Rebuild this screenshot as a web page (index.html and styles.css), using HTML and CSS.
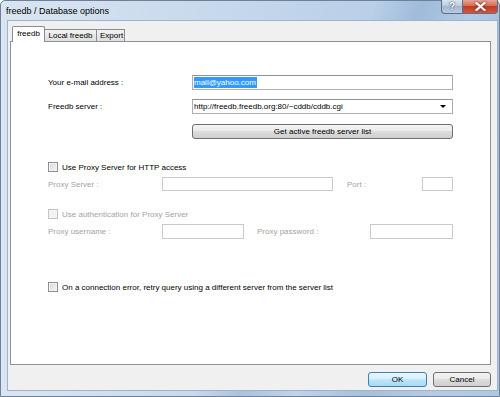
FILE: index.html
```html
<!DOCTYPE html>
<html>
<head>
<meta charset="utf-8">
<link rel="stylesheet" href="styles.css">
</head>
<body>
<div class="window">
  <div class="titlebar">
    <span class="title">freedb / Database options</span>
    <div class="caption-btns">
      <div class="cbtn help">?</div>
      <div class="cbtn close">
        <svg width="11" height="9" viewBox="0 0 11 9"><path d="M1.5 1 L9.5 8 M9.5 1 L1.5 8" stroke="#fff" stroke-width="2.2" stroke-linecap="square"/></svg>
      </div>
    </div>
  </div>
  <div class="client">
    <div class="tabs">
      <div class="tab active">freedb</div>
      <div class="tab">Local freedb</div>
      <div class="tab">Export</div>
    </div>
    <div class="panel">
      <div class="row r-email">
        <span class="lbl w144">Your e-mail address :</span>
        <div class="field w261"><span class="sel">mail@yahoo.com</span></div>
      </div>
      <div class="row r-server">
        <span class="lbl w144">Freedb server :</span>
        <div class="field combo w261"><span>http://freedb.freedb.org:80/~cddb/cddb.cgi</span><span class="arrow"></span></div>
      </div>
      <div class="row r-getlist">
        <span class="w144"></span>
        <div class="pbtn w261">Get active freedb server list</div>
      </div>
      <div class="row r-check r-proxycheck">
        <span class="cb"></span><span class="cbl">Use Proxy Server for HTTP access</span>
      </div>
      <div class="row r-proxy">
        <span class="lbl dis w114">Proxy Server :</span>
        <div class="field disf w171"></div>
        <span class="lbl dis portl">Port :</span>
        <div class="field disf w31"></div>
      </div>
      <div class="row r-check r-authcheck">
        <span class="cb discb"></span><span class="cbl dis">Use authentication for Proxy Server</span>
      </div>
      <div class="row r-user">
        <span class="lbl dis w114">Proxy username :</span>
        <div class="field disf w82"></div>
        <span class="lbl dis passl">Proxy password :</span>
        <div class="field disf w83"></div>
      </div>
      <div class="row r-check r-retry">
        <span class="cb"></span><span class="cbl">On a connection error, retry query using a different server from the server list</span>
      </div>
    </div>
    <div class="footer">
      <div class="btn default">OK</div>
      <div class="btn">Cancel</div>
    </div>
  </div>
</div>
</body>
</html>
```

FILE: styles.css
```css
html, body {
  margin: 0;
  padding: 0;
}
body {
  font-family: "Liberation Sans", Arial, sans-serif;
  font-size: 8px;
  color: #000;
  background: #fff;
}
.window {
  width: 500px;
  height: 397px;
  box-sizing: border-box;
  border: 1px solid #6f8196;
  border-radius: 5px 5px 0 0;
  background:
    linear-gradient(115deg, rgba(255,255,255,0) 0%, rgba(255,255,255,0) 55%, rgba(120,155,195,0.35) 62%, rgba(255,255,255,0) 70%, rgba(120,155,195,0.3) 80%, rgba(255,255,255,0) 90%),
    linear-gradient(90deg, #d9e5f2 0%, #c6d8ec 45%, #aec8e5 100%);
  display: flex;
  flex-direction: column;
}
.titlebar {
  height: 20px;
  display: flex;
  justify-content: space-between;
  align-items: flex-start;
}
.title {
  font-size: 9px;
  padding-left: 5px;
  line-height: 20px;
  color: #000;
}
.caption-btns {
  display: flex;
  margin-right: 1px;
  margin-top: -1px;
}
.cbtn {
  height: 14px;
  box-sizing: border-box;
  border: 1px solid #5e6f84;
  border-top: none;
  display: flex;
  align-items: center;
  justify-content: center;
}
.help {
  width: 21px;
  border-radius: 0 0 0 4px;
  border-right: none;
  background: linear-gradient(#d8e4f1 0%, #bccde2 45%, #a3b8d2 50%, #b9cce2 100%);
  color: #fff;
  font-weight: bold;
  font-size: 10px;
  text-shadow: 0 0 2px #45566b, 0 0 1px #45566b;
}
.close {
  width: 36px;
  border-radius: 0 0 4px 0;
  background: linear-gradient(#e8a493 0%, #d56b55 45%, #c33b22 50%, #d2583e 100%);
}
.close svg {
  filter: drop-shadow(0 0 1px #5a1a10);
}
.client {
  margin-left: 7px;
  margin-right: 2px;
  height: 369px;
  background: #f0f0f0;
  box-shadow: 0 0 0 1px #9fb4cc;
  display: flex;
  flex-direction: column;
}
.tabs {
  display: flex;
  align-items: flex-end;
  margin-top: 4px;
  margin-left: 4px;
  height: 16px;
  position: relative;
  z-index: 1;
}
.tab {
  height: 12px;
  box-sizing: border-box;
  border: 1px solid #898c95;
  border-bottom: none;
  border-left: none;
  background: linear-gradient(#f2f2f2, #dedede);
  line-height: 11px;
  padding: 0 3px;
  text-align: center;
}
.tab.active {
  height: 16px;
  width: 33px;
  border-left: 1px solid #898c95;
  background: #fff;
  line-height: 14px;
  margin-bottom: -1px;
  border-radius: 2px 2px 0 0;
}
.tab:nth-child(2) { width: 52px; }
.tab:nth-child(3) { width: 28px; }
.panel {
  margin-left: 2px;
  width: 481px;
  height: 324px;
  box-sizing: border-box;
  border: 1px solid #8e9196;
  background: #fff;
  padding-top: 33px;
  padding-left: 37px;
  display: flex;
  flex-direction: column;
}
.row {
  display: flex;
  align-items: center;
}
.r-email { height: 15px; }
.r-server { height: 15px; margin-top: 9px; }
.r-getlist { height: 15px; margin-top: 10px; }
.r-proxycheck { margin-top: 22px; }
.r-proxy { height: 14px; margin-top: 4px; }
.r-authcheck { margin-top: 17px; }
.r-user { height: 15px; margin-top: 4px; }
.r-retry { margin-top: 42px; }
.r-check { height: 12px; }
.lbl { flex: none; }
.w144 { width: 144px; flex: none; }
.w114 { width: 114px; }
.w261 { width: 261px; }
.w171 { width: 171px; }
.w31 { width: 31px; }
.w82 { width: 82px; }
.w83 { width: 83px; }
.portl { width: 75px; margin-left: 14px; }
.passl { width: 113px; margin-left: 13px; }
.dis { color: #a3a3a3; }
.field {
  height: 100%;
  box-sizing: border-box;
  border: 1px solid #abadb3;
  border-top-color: #8d939b;
  background: #fff;
  display: flex;
  align-items: center;
  padding-left: 1px;
  flex: none;
}
.disf {
  border-color: #c9cacd;
}
.sel {
  background: #3399ff;
  color: #fff;
  line-height: 11px;
  padding-right: 1px;
}
.combo {
  justify-content: space-between;
  padding-right: 6px;
}
.arrow {
  width: 0;
  height: 0;
  border-left: 3px solid transparent;
  border-right: 3px solid transparent;
  border-top: 3px solid #000;
}
.pbtn {
  height: 100%;
  box-sizing: border-box;
  border: 1px solid #707070;
  border-radius: 3px;
  background: linear-gradient(#f3f3f3 0%, #ebebeb 45%, #dddddd 50%, #cfcfcf 100%);
  display: flex;
  align-items: center;
  justify-content: center;
  flex: none;
}
.cb {
  width: 10px;
  height: 10px;
  box-sizing: border-box;
  border: 1px solid #8e8f8f;
  background: linear-gradient(135deg, #d8d8d8, #f5f5f5);
  box-shadow: inset 0 0 0 1px #f4f4f4;
  flex: none;
}
.discb {
  border-color: #c3c3c3;
  background: #f2f2f2;
}
.cbl {
  margin-left: 4px;
}
.footer {
  display: flex;
  justify-content: flex-end;
  margin-top: 7px;
  margin-right: 6px;
  gap: 6px;
}
.btn {
  width: 58px;
  height: 15px;
  box-sizing: border-box;
  border: 1px solid #707070;
  border-radius: 3px;
  background: linear-gradient(#f3f3f3 0%, #ebebeb 45%, #dddddd 50%, #cfcfcf 100%);
  display: flex;
  align-items: center;
  justify-content: center;
}
.btn.default {
  width: 59px;
  border-color: #3c7fb1;
  background: linear-gradient(#eaf6fd 0%, #d9f0fc 45%, #bee6fd 50%, #a7d9f5 100%);
}
```
